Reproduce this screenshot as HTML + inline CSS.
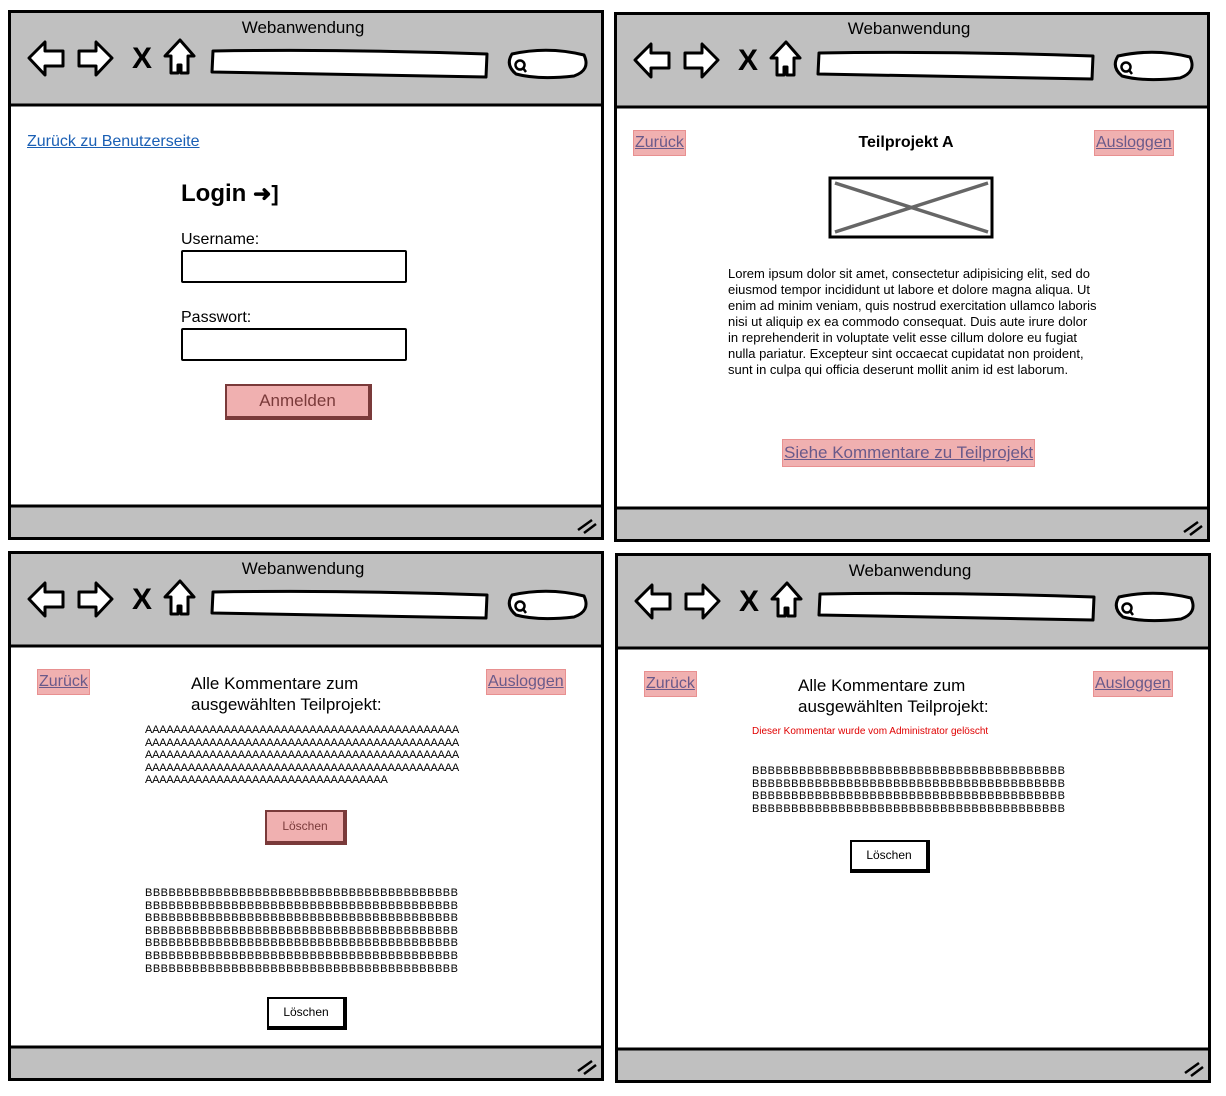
<!DOCTYPE html>
<html><head><meta charset="utf-8"><style>
body{margin:0;width:1226px;height:1096px;background:#fff;position:relative;overflow:hidden;font-family:"Liberation Sans",sans-serif;color:#000}
.w{position:absolute;width:596px;height:530px}
.w svg.c{position:absolute;left:0;top:0}
.t{position:absolute;white-space:nowrap}
.pl{position:absolute;background:#f0b0b0;border:1px solid #e89090;color:#6a5a8a;text-decoration:underline;font-size:16px;line-height:24px;padding:0 1px}
.mono{font-size:11px;line-height:12.6px;white-space:pre;letter-spacing:-0.2px}
</style></head><body>

<div class="w" style="left:8px;top:10px">
<svg class="c" width="596" height="532"><rect x="1.5" y="1.5" width="593" height="527" fill="#fff" stroke="#000" stroke-width="3"/><rect x="3" y="3" width="590" height="92" fill="#c0c0c0"/><line x1="1" y1="95" x2="595" y2="95" stroke="#000" stroke-width="3"/><rect x="3" y="497" width="590" height="30" fill="#c0c0c0"/><line x1="1" y1="496" x2="595" y2="496" stroke="#000" stroke-width="3"/>
<g fill="#fff" stroke="#000" stroke-width="3" stroke-linejoin="round"><path d="M21 48 L37 32 L37 41 L55 41 L55 56 L37 56 L37 65 Z"/><path d="M104 48 L88 32 L88 41 L71 41 L71 56 L88 56 L88 65 Z"/><path d="M172 30 L186 46 L180 46 L180 63 L173 63 L173 55 L170 55 L170 63 L163 63 L163 46 L157 46 Z"/><path d="M205 41 Q340 39 479 44 L478 67 Q340 65 204 62 Z"/><path d="M504 44 Q540 36 576 45 Q583 60 566 66 Q530 70 508 64 Q497 55 504 44 Z"/></g>
<text x="124" y="58" font-size="30" font-weight="bold" font-family="Liberation Sans">X</text>
<circle cx="512" cy="55" r="4.5" fill="none" stroke="#000" stroke-width="2.5"/><line x1="515" y1="58" x2="518" y2="62" stroke="#000" stroke-width="2.5"/>
<g stroke="#000" stroke-width="2.5"><line x1="570" y1="520" x2="584" y2="510"/><line x1="576" y1="523" x2="588" y2="514"/></g>
<text x="295" y="23" font-size="17" text-anchor="middle" font-family="Liberation Sans">Webanwendung</text></svg>
<div class="t" style="left:19px;top:123px;font-size:16px;color:#1a5fb4;text-decoration:underline">Zurück zu Benutzerseite</div>
<div class="t" style="left:173px;top:170px;font-size:24px;font-weight:bold">Login <span style="font-size:22px">➜]</span></div>
<div class="t" style="left:173px;top:221px;font-size:16px">Username:</div>
<div style="position:absolute;left:173px;top:240px;width:222px;height:29px;border:2.5px solid #000;border-radius:2px"></div>
<div class="t" style="left:173px;top:299px;font-size:16px">Passwort:</div>
<div style="position:absolute;left:173px;top:318px;width:222px;height:29px;border:2.5px solid #000;border-radius:2px"></div>
<div style="position:absolute;left:217px;top:374px;width:141px;height:30px;background:#f0b0b0;border:2px solid #7a3a3a;border-right-width:4px;border-bottom-width:4px;color:#7a3a3a;font-size:17px;text-align:center;line-height:30px">Anmelden</div>
</div>

<div class="w" style="left:614px;top:12px">
<svg class="c" width="596" height="532"><rect x="1.5" y="1.5" width="593" height="527" fill="#fff" stroke="#000" stroke-width="3"/><rect x="3" y="3" width="590" height="92" fill="#c0c0c0"/><line x1="1" y1="95" x2="595" y2="95" stroke="#000" stroke-width="3"/><rect x="3" y="497" width="590" height="30" fill="#c0c0c0"/><line x1="1" y1="496" x2="595" y2="496" stroke="#000" stroke-width="3"/>
<g fill="#fff" stroke="#000" stroke-width="3" stroke-linejoin="round"><path d="M21 48 L37 32 L37 41 L55 41 L55 56 L37 56 L37 65 Z"/><path d="M104 48 L88 32 L88 41 L71 41 L71 56 L88 56 L88 65 Z"/><path d="M172 30 L186 46 L180 46 L180 63 L173 63 L173 55 L170 55 L170 63 L163 63 L163 46 L157 46 Z"/><path d="M205 41 Q340 39 479 44 L478 67 Q340 65 204 62 Z"/><path d="M504 44 Q540 36 576 45 Q583 60 566 66 Q530 70 508 64 Q497 55 504 44 Z"/></g>
<text x="124" y="58" font-size="30" font-weight="bold" font-family="Liberation Sans">X</text>
<circle cx="512" cy="55" r="4.5" fill="none" stroke="#000" stroke-width="2.5"/><line x1="515" y1="58" x2="518" y2="62" stroke="#000" stroke-width="2.5"/>
<g stroke="#000" stroke-width="2.5"><line x1="570" y1="520" x2="584" y2="510"/><line x1="576" y1="523" x2="588" y2="514"/></g>
<text x="295" y="22" font-size="17" text-anchor="middle" font-family="Liberation Sans">Webanwendung</text>
<rect x="216" y="166" width="162" height="59" fill="none" stroke="#000" stroke-width="3"/><g stroke="#666" stroke-width="3.5"><line x1="221" y1="171" x2="374" y2="220"/><line x1="221" y1="220" x2="374" y2="171"/></g></svg>
<div class="pl" style="left:19px;top:118px">Zurück</div>
<div class="pl" style="left:480px;top:118px">Ausloggen</div>
<div class="t" style="left:292px;top:122px;font-size:16px;font-weight:bold;transform:translateX(-50%)">Teilprojekt A</div>
<div style="position:absolute;left:114px;top:254px;width:372px;font-size:13px;line-height:16px">Lorem ipsum dolor sit amet, consectetur adipisicing elit, sed do eiusmod tempor incididunt ut labore et dolore magna aliqua. Ut enim ad minim veniam, quis nostrud exercitation ullamco laboris nisi ut aliquip ex ea commodo consequat. Duis aute irure dolor in reprehenderit in voluptate velit esse cillum dolore eu fugiat nulla pariatur. Excepteur sint occaecat cupidatat non proident, sunt in culpa qui officia deserunt mollit anim id est laborum.</div>
<div class="pl" style="left:168px;top:427px;font-size:17px;line-height:26px">Siehe Kommentare zu Teilprojekt</div>
</div>

<div class="w" style="left:8px;top:551px">
<svg class="c" width="596" height="532"><rect x="1.5" y="1.5" width="593" height="527" fill="#fff" stroke="#000" stroke-width="3"/><rect x="3" y="3" width="590" height="92" fill="#c0c0c0"/><line x1="1" y1="95" x2="595" y2="95" stroke="#000" stroke-width="3"/><rect x="3" y="497" width="590" height="30" fill="#c0c0c0"/><line x1="1" y1="496" x2="595" y2="496" stroke="#000" stroke-width="3"/>
<g fill="#fff" stroke="#000" stroke-width="3" stroke-linejoin="round"><path d="M21 48 L37 32 L37 41 L55 41 L55 56 L37 56 L37 65 Z"/><path d="M104 48 L88 32 L88 41 L71 41 L71 56 L88 56 L88 65 Z"/><path d="M172 30 L186 46 L180 46 L180 63 L173 63 L173 55 L170 55 L170 63 L163 63 L163 46 L157 46 Z"/><path d="M205 41 Q340 39 479 44 L478 67 Q340 65 204 62 Z"/><path d="M504 44 Q540 36 576 45 Q583 60 566 66 Q530 70 508 64 Q497 55 504 44 Z"/></g>
<text x="124" y="58" font-size="30" font-weight="bold" font-family="Liberation Sans">X</text>
<circle cx="512" cy="55" r="4.5" fill="none" stroke="#000" stroke-width="2.5"/><line x1="515" y1="58" x2="518" y2="62" stroke="#000" stroke-width="2.5"/>
<g stroke="#000" stroke-width="2.5"><line x1="570" y1="520" x2="584" y2="510"/><line x1="576" y1="523" x2="588" y2="514"/></g>
<text x="295" y="23" font-size="17" text-anchor="middle" font-family="Liberation Sans">Webanwendung</text></svg>
<div class="pl" style="left:29px;top:118px">Zurück</div>
<div class="pl" style="left:478px;top:118px">Ausloggen</div>
<div style="position:absolute;left:183px;top:122px;font-size:17px;line-height:21px">Alle Kommentare zum<br>ausgewählten Teilprojekt:</div>
<div class="t mono" style="left:137px;top:173px">AAAAAAAAAAAAAAAAAAAAAAAAAAAAAAAAAAAAAAAAAAAA
AAAAAAAAAAAAAAAAAAAAAAAAAAAAAAAAAAAAAAAAAAAA
AAAAAAAAAAAAAAAAAAAAAAAAAAAAAAAAAAAAAAAAAAAA
AAAAAAAAAAAAAAAAAAAAAAAAAAAAAAAAAAAAAAAAAAAA
AAAAAAAAAAAAAAAAAAAAAAAAAAAAAAAAAA</div>
<div style="position:absolute;left:257px;top:259px;width:76px;height:29px;background:#f0b0b0;border:2px solid #7a3a3a;border-right-width:4px;border-bottom-width:4px;color:#7a3a3a;font-size:12px;text-align:center;line-height:29px">Löschen</div>
<div class="t mono" style="left:137px;top:336px;letter-spacing:0.5px">BBBBBBBBBBBBBBBBBBBBBBBBBBBBBBBBBBBBBBBB
BBBBBBBBBBBBBBBBBBBBBBBBBBBBBBBBBBBBBBBB
BBBBBBBBBBBBBBBBBBBBBBBBBBBBBBBBBBBBBBBB
BBBBBBBBBBBBBBBBBBBBBBBBBBBBBBBBBBBBBBBB
BBBBBBBBBBBBBBBBBBBBBBBBBBBBBBBBBBBBBBBB
BBBBBBBBBBBBBBBBBBBBBBBBBBBBBBBBBBBBBBBB
BBBBBBBBBBBBBBBBBBBBBBBBBBBBBBBBBBBBBBBB</div>
<div style="position:absolute;left:259px;top:446px;width:74px;height:27px;background:#fff;border:2px solid #000;border-right-width:4px;border-bottom-width:4px;font-size:12px;text-align:center;line-height:27px">Löschen</div>
</div>

<div class="w" style="left:615px;top:553px">
<svg class="c" width="596" height="532"><rect x="1.5" y="1.5" width="593" height="527" fill="#fff" stroke="#000" stroke-width="3"/><rect x="3" y="3" width="590" height="92" fill="#c0c0c0"/><line x1="1" y1="95" x2="595" y2="95" stroke="#000" stroke-width="3"/><rect x="3" y="497" width="590" height="30" fill="#c0c0c0"/><line x1="1" y1="496" x2="595" y2="496" stroke="#000" stroke-width="3"/>
<g fill="#fff" stroke="#000" stroke-width="3" stroke-linejoin="round"><path d="M21 48 L37 32 L37 41 L55 41 L55 56 L37 56 L37 65 Z"/><path d="M104 48 L88 32 L88 41 L71 41 L71 56 L88 56 L88 65 Z"/><path d="M172 30 L186 46 L180 46 L180 63 L173 63 L173 55 L170 55 L170 63 L163 63 L163 46 L157 46 Z"/><path d="M205 41 Q340 39 479 44 L478 67 Q340 65 204 62 Z"/><path d="M504 44 Q540 36 576 45 Q583 60 566 66 Q530 70 508 64 Q497 55 504 44 Z"/></g>
<text x="124" y="58" font-size="30" font-weight="bold" font-family="Liberation Sans">X</text>
<circle cx="512" cy="55" r="4.5" fill="none" stroke="#000" stroke-width="2.5"/><line x1="515" y1="58" x2="518" y2="62" stroke="#000" stroke-width="2.5"/>
<g stroke="#000" stroke-width="2.5"><line x1="570" y1="520" x2="584" y2="510"/><line x1="576" y1="523" x2="588" y2="514"/></g>
<text x="295" y="23" font-size="17" text-anchor="middle" font-family="Liberation Sans">Webanwendung</text></svg>
<div class="pl" style="left:29px;top:118px">Zurück</div>
<div class="pl" style="left:478px;top:118px">Ausloggen</div>
<div style="position:absolute;left:183px;top:122px;font-size:17px;line-height:21px">Alle Kommentare zum<br>ausgewählten Teilprojekt:</div>
<div class="t" style="left:137px;top:173px;font-size:10px;color:#e00000">Dieser Kommentar wurde vom Administrator gelöscht</div>
<div class="t mono" style="left:137px;top:212px;letter-spacing:0.5px">BBBBBBBBBBBBBBBBBBBBBBBBBBBBBBBBBBBBBBBB
BBBBBBBBBBBBBBBBBBBBBBBBBBBBBBBBBBBBBBBB
BBBBBBBBBBBBBBBBBBBBBBBBBBBBBBBBBBBBBBBB
BBBBBBBBBBBBBBBBBBBBBBBBBBBBBBBBBBBBBBBB</div>
<div style="position:absolute;left:235px;top:287px;width:74px;height:27px;background:#fff;border:2px solid #000;border-right-width:4px;border-bottom-width:4px;font-size:12px;text-align:center;line-height:27px">Löschen</div>
</div>
</body></html>
